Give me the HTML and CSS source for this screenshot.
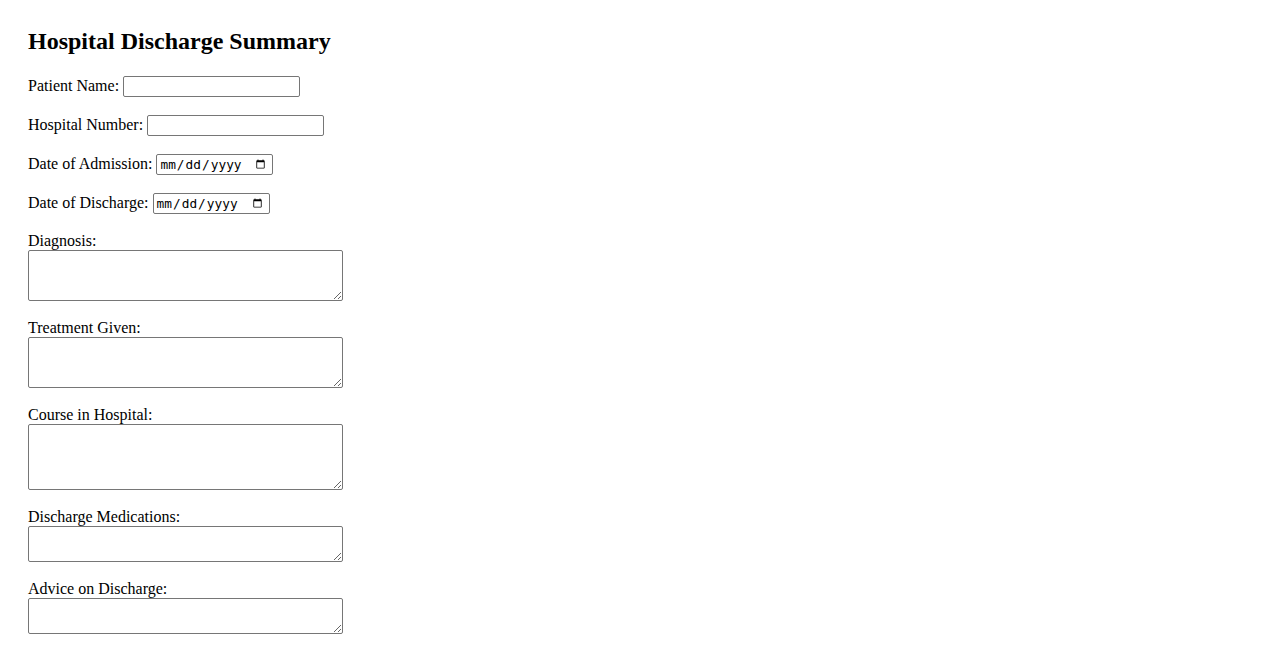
FILE: index.html
```html
<!DOCTYPE html>
<html lang="en">
<head>
<meta charset="utf-8">
<title>Hospital Discharge Summary</title>
<link rel="stylesheet" href="styles.css">
</head>
<body>
<div class="page">
  <h2 class="title">Hospital Discharge Summary</h2>
  <form class="form">
    <div class="group row">
      <label for="pname">Patient Name:</label>
      <input class="text-input" type="text" id="pname">
    </div>
    <div class="group row">
      <label for="hnum">Hospital Number:</label>
      <input class="text-input" type="text" id="hnum">
    </div>
    <div class="group row">
      <label for="doa">Date of Admission:</label>
      <input class="date-input" type="date" id="doa">
    </div>
    <div class="group row">
      <label for="dod">Date of Discharge:</label>
      <input class="date-input" type="date" id="dod">
    </div>
    <div class="group">
      <label class="block-label" for="diag">Diagnosis:</label>
      <textarea class="area area-3" id="diag"></textarea>
    </div>
    <div class="group">
      <label class="block-label" for="treat">Treatment Given:</label>
      <textarea class="area area-3" id="treat"></textarea>
    </div>
    <div class="group">
      <label class="block-label" for="course">Course in Hospital:</label>
      <textarea class="area area-4" id="course"></textarea>
    </div>
    <div class="group">
      <label class="block-label" for="meds">Discharge Medications:</label>
      <textarea class="area area-2" id="meds"></textarea>
    </div>
    <div class="group">
      <label class="block-label" for="advice">Advice on Discharge:</label>
      <textarea class="area area-2" id="advice"></textarea>
    </div>
  </form>
</div>
</body>
</html>
```

FILE: styles.css
```css
html, body {
  margin: 0;
  padding: 0;
  background: #ffffff;
}
body {
  font-family: "Liberation Serif", "Times New Roman", serif;
  font-size: 16px;
  color: #000000;
}
.page {
  padding: 28px 28px 20px 28px;
}
.title {
  font-size: 24px;
  font-weight: bold;
  margin: 0 0 21px 0;
}
.group {
  margin-bottom: 18px;
}
.block-label {
  display: block;
  line-height: 18px;
}
.text-input {
  box-sizing: border-box;
  width: 177px;
  height: 21px;
  font-family: "Liberation Sans", Arial, sans-serif;
  font-size: 13.33px;
  border: 1px solid #767676;
  border-radius: 2px;
  padding: 1px 2px;
}
.date-input {
  box-sizing: border-box;
  width: 117px;
  height: 21px;
  font-family: "DejaVu Sans Mono", monospace;
  font-size: 12.8px;
  border: 1px solid #767676;
  border-radius: 2px;
  padding: 1px 2px;
}
.date-input::-webkit-calendar-picker-indicator {
  width: 11px;
  height: 12px;
  padding: 0;
  margin: 0 4px 0 0;
}
.area {
  box-sizing: border-box;
  display: block;
  margin: 0;
  width: 315px;
  font-family: "Liberation Mono", monospace;
  font-size: 13.33px;
  border: 1px solid #767676;
  border-radius: 2px;
  padding: 2px;
}
.area-2 { height: 36px; }
.area-3 { height: 51px; }
.area-4 { height: 66px; }
```
